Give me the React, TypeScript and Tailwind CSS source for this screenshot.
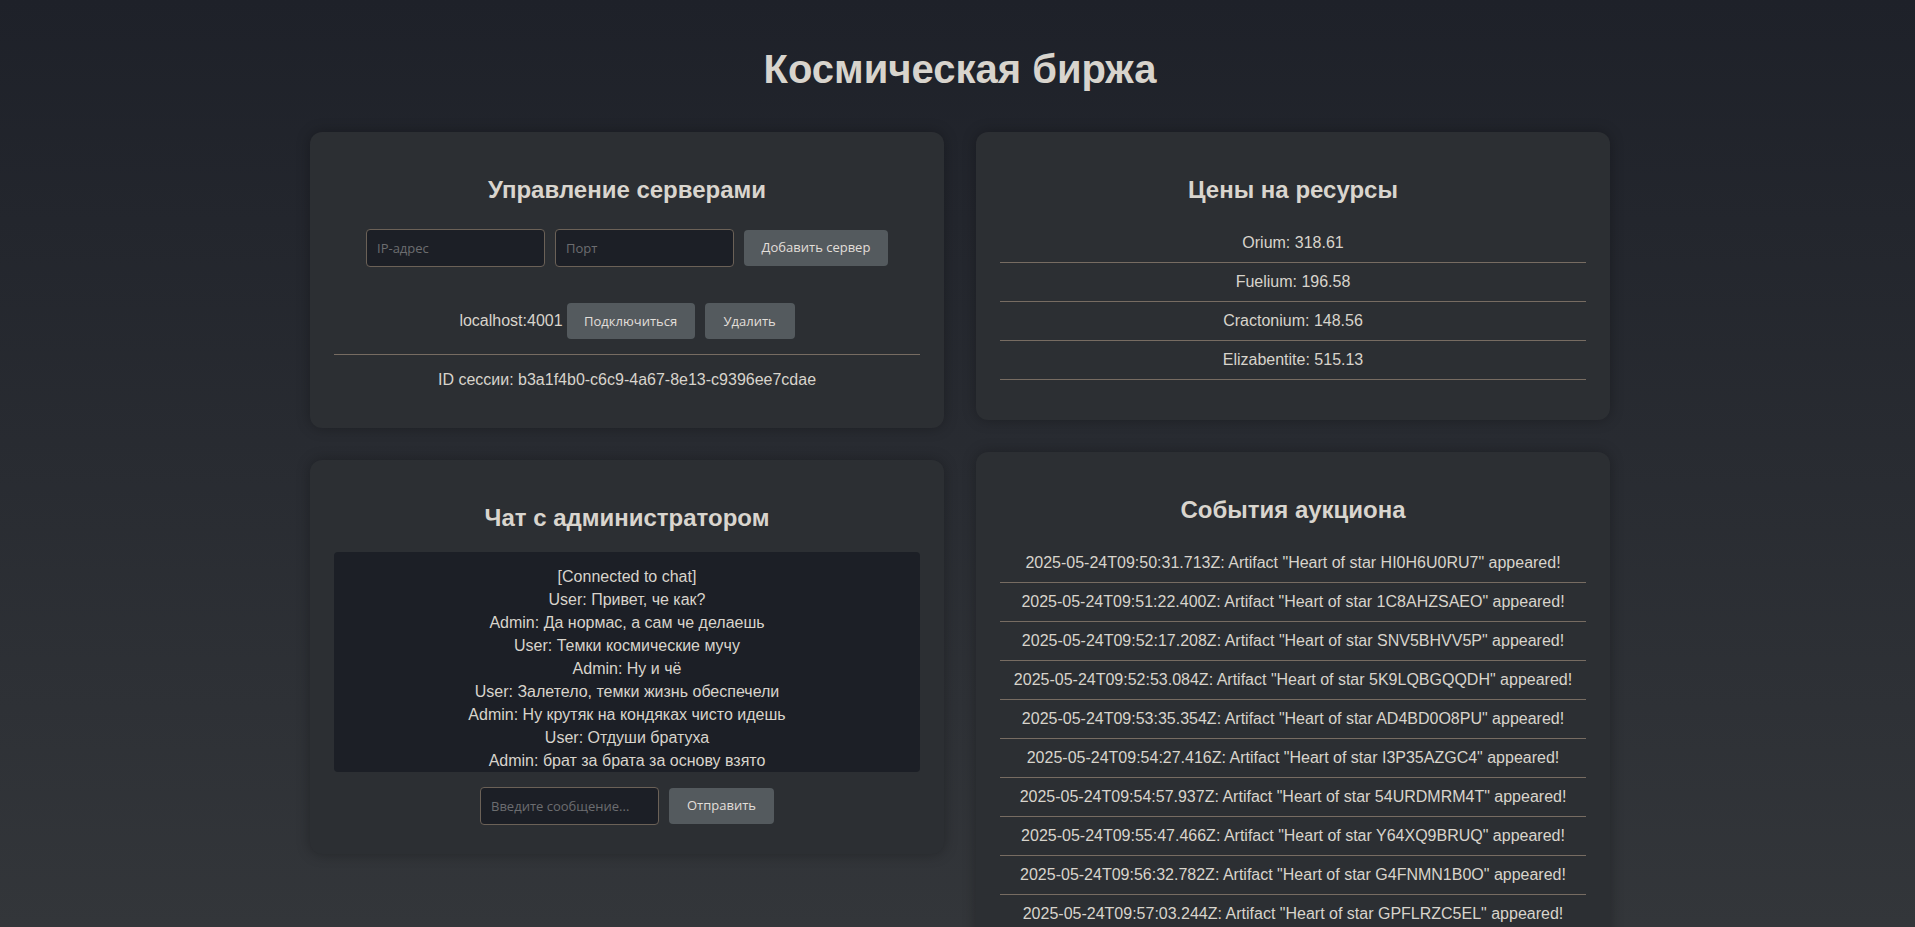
import React from "react";

const prices = [
  { name: "Orium", value: "318.61" },
  { name: "Fuelium", value: "196.58" },
  { name: "Cractonium", value: "148.56" },
  { name: "Elizabentite", value: "515.13" },
];

const messages = [
  "[Connected to chat]",
  "User: Привет, че как?",
  "Admin: Да нормас, а сам че делаешь",
  "User: Темки космические мучу",
  "Admin: Ну и чё",
  "User: Залетело, темки жизнь обеспечели",
  "Admin: Ну крутяк на кондяках чисто идешь",
  "User: Отдуши братуха",
  "Admin: брат за брата за основу взято",
];

const events = [
  ["2025-05-24T09:50:31.713Z", "HI0H6U0RU7"],
  ["2025-05-24T09:51:22.400Z", "1C8AHZSAEO"],
  ["2025-05-24T09:52:17.208Z", "SNV5BHVV5P"],
  ["2025-05-24T09:52:53.084Z", "5K9LQBGQQDH"],
  ["2025-05-24T09:53:35.354Z", "AD4BD0O8PU"],
  ["2025-05-24T09:54:27.416Z", "I3P35AZGC4"],
  ["2025-05-24T09:54:57.937Z", "54URDMRM4T"],
  ["2025-05-24T09:55:47.466Z", "Y64XQ9BRUQ"],
  ["2025-05-24T09:56:32.782Z", "G4FNMN1B0O"],
  ["2025-05-24T09:57:03.244Z", "GPFLRZC5EL"],
  ["2025-05-24T09:57:48.105Z", "K2XW7PLM3A"],
];

function Card({ title, children }: { title: string; children: React.ReactNode }) {
  return (
    <section className="rounded-xl bg-[#2c2f33] px-6 pt-6 pb-6 text-center shadow-[0_0_14px_rgba(0,0,0,0.28)]">
      <h2 className="mt-5 mb-5 text-[24px] leading-[28px] font-bold text-[#d9d5ce]">{title}</h2>
      {children}
    </section>
  );
}

function Button({ label, width }: { label: string; width: string }) {
  return (
    <button
      className={`${width} flex h-9 shrink-0 items-center justify-center rounded bg-[#545a5e] font-['Open_Sans',sans-serif] text-[13px] text-[#e2dfda]`}
    >
      {label}
    </button>
  );
}

function Input({ placeholder }: { placeholder: string }) {
  return (
    <input
      placeholder={placeholder}
      className="h-[38px] w-[179px] rounded border border-[#6b6157] bg-[#1c1f26] px-[10px] font-['Open_Sans',sans-serif] text-[13px] text-[#d8d4cc] outline-none placeholder:text-[#6c6d70]"
    />
  );
}

export default function App() {
  return (
    <div className="min-h-screen bg-[linear-gradient(180deg,#1e2129_0%,#33363a_100%)] bg-fixed pl-[5px] font-['Liberation_Sans',Arial,sans-serif] text-[16px] text-[#d8d4cc]">
      <h1 className="pt-[46px] mb-10 text-center text-[40px] leading-[46px] font-bold text-[#d8d4cd]">
        Космическая биржа
      </h1>

      <div className="mx-auto flex w-[1300px] items-start gap-8 pb-10">
        {/* left column */}
        <div className="flex flex-1 flex-col gap-8">
          <Card title="Управление серверами">
            <div className="flex items-center justify-center gap-[10px] pt-[5px]">
              <Input placeholder="IP-адрес" />
              <Input placeholder="Порт" />
              <Button label="Добавить сервер" width="w-[144px]" />
            </div>
            <ul className="mt-[21px]">
              <li className="flex items-center justify-center border-b border-[#776c62] pt-[15px] pb-[15px] leading-[18px]">
                <span className="mr-[4px]">localhost:4001</span>
                <div className="flex gap-[10px]">
                  <Button label="Подключиться" width="w-[128px]" />
                  <Button label="Удалить" width="w-[90px]" />
                </div>
              </li>
            </ul>
            <p className="mt-4 mb-[15px] leading-[18px]">ID сессии: b3a1f4b0-c6c9-4a67-8e13-c9396ee7cdae</p>
          </Card>

          <Card title="Чат с администратором">
            <div className="h-[220px] overflow-hidden rounded bg-[#1c1f26] pt-[13px]">
              {messages.map((m, i) => (
                <div key={i} className="leading-[23px]">
                  {m}
                </div>
              ))}
            </div>
            <div className="mt-[15px] mb-[5px] flex items-center justify-center gap-[10px]">
              <Input placeholder="Введите сообщение..." />
              <Button label="Отправить" width="w-[105px]" />
            </div>
          </Card>
        </div>

        {/* right column */}
        <div className="flex flex-1 flex-col gap-8">
          <Card title="Цены на ресурсы">
            <ul className="mb-4">
              {prices.map((p) => (
                <li key={p.name} className="border-b border-[#776c62] py-[10px] leading-[18px]">
                  {p.name}: {p.value}
                </li>
              ))}
            </ul>
          </Card>

          <Card title="События аукциона">
            <ul className="mb-4">
              {events.map(([time, code]) => (
                <li key={time} className="border-b border-[#776c62] py-[10px] leading-[18px]">
                  {time}: Artifact "Heart of star {code}" appeared!
                </li>
              ))}
            </ul>
          </Card>
        </div>
      </div>
    </div>
  );
}
